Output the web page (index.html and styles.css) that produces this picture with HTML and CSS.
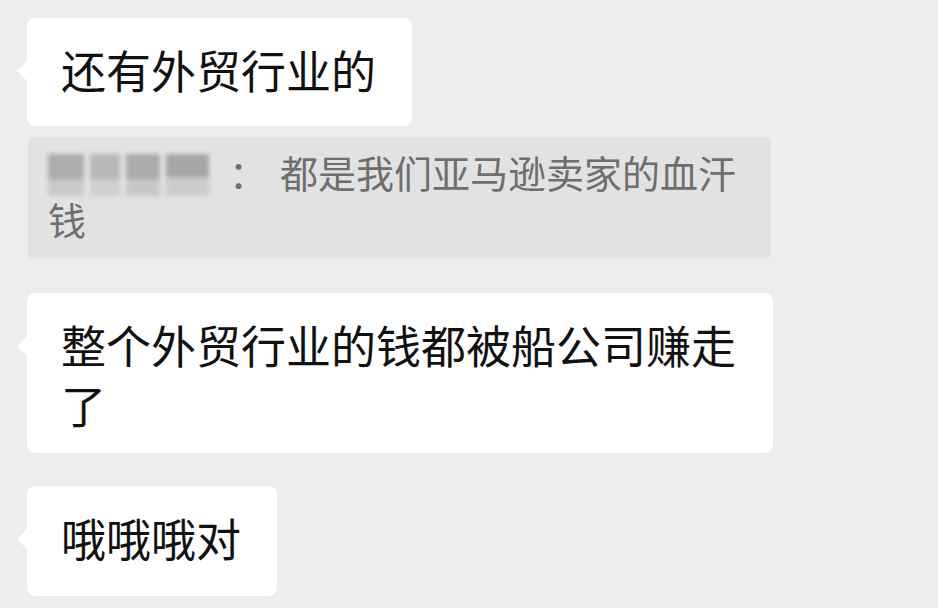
FILE: index.html
```html
<!DOCTYPE html>
<html lang="zh-CN">
<head>
    <meta charset="UTF-8">
    <title>聊天记录</title>
    <link rel="stylesheet" href="styles.css">
</head>
<body>
    <div class="chat">
        <div class="bubble first">还有外贸行业的</div>

        <div class="quote">
            <span class="name-blur">
                <i class="b1"></i><i class="b2"></i><i class="b3"></i><i class="b4"></i>
            </span><span class="colon">：</span>都是我们亚马逊卖家的血汗钱
        </div>

        <div class="bubble second">整个外贸行业的钱都被船公司赚走了</div>

        <div class="bubble third">哦哦哦对</div>
    </div>
</body>
</html>
```

FILE: styles.css
```css
body {
    margin: 0;
    padding: 0;
    background-color: #ededed;
    font-family: "Noto Sans CJK SC", "Noto Sans", sans-serif;
}
.chat {
    display: flex;
    flex-direction: column;
    align-items: flex-start;
    padding: 18px 0 0 27px;
}
.bubble {
    position: relative;
    box-sizing: border-box;
    max-width: 746px;
    padding: 22px 36px 26px 34px;
    background-color: #ffffff;
    border-radius: 8px;
    color: #111111;
    font-size: 45px;
    line-height: 60px;
}
.bubble::before {
    content: "";
    position: absolute;
    left: -10px;
    top: 43px;
    border-top: 10px solid transparent;
    border-bottom: 10px solid transparent;
    border-right: 10px solid #ffffff;
}
.quote {
    box-sizing: border-box;
    width: 743px;
    margin: 11px 0 0 1px;
    padding: 12px 30px 17px 20px;
    background-color: #e2e2e2;
    border-radius: 6px;
    color: #6e6e6e;
    font-size: 38px;
    line-height: 46px;
}
.name-blur {
    display: inline-flex;
    width: 167px;
    height: 42px;
    vertical-align: -8px;
    filter: blur(2px);
}
.name-blur i {
    display: block;
    height: 100%;
    margin-right: 6px;
}
.name-blur .b1 { width: 36px; background: linear-gradient(#acacac 60%, #c9c9c9 60%); }
.name-blur .b2 { width: 30px; background: linear-gradient(#b8b8b8 60%, #cfcfcf 60%); }
.name-blur .b3 { width: 34px; background: linear-gradient(#ababab 60%, #c7c7c7 60%); }
.name-blur .b4 { width: 43px; margin-right: 0; background: linear-gradient(#a6a6a6 55%, #cbcbcb 55%); }
.colon {
    margin: 0 13px 0 14px;
}
.second {
    margin-top: 34px;
    padding-bottom: 18px;
}
.third {
    margin-top: 33px;
    padding-bottom: 28px;
}
```
